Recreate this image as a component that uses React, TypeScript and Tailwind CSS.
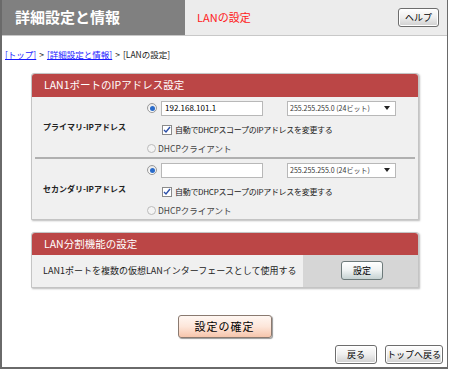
import React from 'react';

const font = { fontFamily: '"Noto Sans CJK JP", "Liberation Sans", sans-serif' };

function GrayButton({ label, className = '' }: { label: string; className?: string }) {
  return (
    <button
      className={`h-[19px] whitespace-nowrap rounded-[3px] border border-[#6d6d6d] bg-gradient-to-b from-[#ffffff] via-[#eeeeee] to-[#cfcfcf] text-[9px] leading-none text-black shadow-[inset_0_0_0_1px_#fff] ${className}`}
    >
      {label}
    </button>
  );
}

function Radio({ checked }: { checked?: boolean }) {
  return (
    <span className="inline-flex h-[10px] w-[10px] items-center justify-center rounded-full border border-[#9a9a9a] bg-gradient-to-b from-[#e8e8e8] to-white">
      {checked && <span className="h-[5px] w-[5px] rounded-full bg-[#2a6bc9]" />}
    </span>
  );
}

function Checkbox() {
  return (
    <span className="inline-flex h-[10px] w-[10px] items-center justify-center border border-[#8a8a8a] bg-white">
      <svg width="8" height="8" viewBox="0 0 8 8">
        <path d="M1 4 L3 6 L7 1" stroke="#2b4fa8" strokeWidth="1.4" fill="none" />
      </svg>
    </span>
  );
}

function AddressBlock({ label, value }: { label: string; value: string }) {
  return (
    <div className="flex h-[60px]">
      <div className="flex w-[105px] items-center whitespace-nowrap pl-[11px] text-[8px] font-bold text-[#222]">{label}</div>
      <div className="flex flex-1 flex-col pl-[10px] pt-[3px]">
        <div className="flex h-[17px] items-center">
          <Radio checked />
          <div className="ml-[4px] flex h-[15px] w-[102px] items-center border border-[#b8b8b8] bg-white pl-[3px] text-[8px] text-black">
            {value}
          </div>
          <div className="ml-[24px] flex h-[15px] w-[109px] items-center justify-between whitespace-nowrap border border-[#b8b8b8] bg-white pl-[2px] pr-[5px] text-[7px] text-[#333]">
            <span>255.255.255.0 (24ビット)</span>
            <svg width="6" height="4" viewBox="0 0 6 4">
              <path d="M0 0 H6 L3 4 Z" fill="#222" />
            </svg>
          </div>
        </div>
        <div className="mt-[5px] flex h-[17px] items-center whitespace-nowrap pl-[15px] text-[8px] tracking-[-0.3px] text-[#222]">
          <Checkbox />
          <span className="ml-[3px]">自動でDHCPスコープのIPアドレスを変更する</span>
        </div>
        <div className="mt-[2px] flex h-[17px] items-center whitespace-nowrap text-[8.5px] text-[#444]">
          <span className="inline-block h-[9px] w-[9px] rounded-full border border-[#bbb] bg-[#f4f4f4]" />
          <span className="ml-[2px]">DHCPクライアント</span>
        </div>
      </div>
    </div>
  );
}

export default function App() {
  return (
    <div className="h-[370px] w-[450px] bg-white" style={font}>
      <div className="flex h-[369px] w-[448px] flex-col border-[2px] border-t-0 border-[#6a6a6a] border-r-[1px]">
        {/* Header */}
        <div className="flex h-[36px] border-b border-[#c8c8c8]">
          <div className="flex w-[183px] items-center bg-[#808080] pl-[13px] text-[15px] font-bold text-white">
            詳細設定と情報
          </div>
          <div className="flex flex-1 items-center justify-between bg-[#ececec] pl-[12px] pr-[8px]">
            <span className="text-[11px] text-[#ff1a1a]">LANの設定</span>
            <GrayButton label="ヘルプ" className="w-[41px]" />
          </div>
        </div>

        {/* Breadcrumb */}
        <div className="mt-[12px] whitespace-nowrap pl-[3px] text-[8.5px] text-[#222]">
          <span className="text-[#1a1aff] underline">[トップ]</span>
          <span className="mx-[3px]">&gt;</span>
          <span className="text-[#1a1aff] underline">[詳細設定と情報]</span>
          <span className="mx-[3px]">&gt;</span>
          <span>[LANの設定]</span>
        </div>

        {/* Panel 1 */}
        <div className="mt-[12px] ml-[29px] w-[388px] rounded-t-[3px] border border-[#c4c4c4] bg-[#f0f0f0] shadow-[1px_1px_2px_#bbb]">
          <div className="flex h-[23px] items-center rounded-t-[3px] bg-[#bb4646] pl-[12px] text-[10.5px] text-white">
            LAN1ポートのIPアドレス設定
          </div>
          <AddressBlock label="プライマリ-IPアドレス" value="192.168.101.1" />
          <div className="mx-[3px] h-[2px] bg-[#b0b0b0]" />
          <AddressBlock label="セカンダリ-IPアドレス" value="" />
        </div>

        {/* Panel 2 */}
        <div className="mt-[12px] ml-[29px] w-[388px] rounded-t-[3px] border border-[#c4c4c4] bg-[#f0f0f0] shadow-[1px_1px_2px_#bbb]">
          <div className="flex h-[22px] items-center rounded-t-[3px] bg-[#bb4646] pl-[12px] text-[10.5px] text-white">
            LAN分割機能の設定
          </div>
          <div className="flex h-[32px]">
            <div className="flex w-[271px] items-center whitespace-nowrap pl-[11px] text-[9px] text-[#222]">
              LAN1ポートを複数の仮想LANインターフェースとして使用する
            </div>
            <div className="flex flex-1 items-center bg-[#d6d6d6] pl-[38px]">
              <button className="h-[19px] w-[42px] rounded-[3px] border border-[#6d7a7a] bg-gradient-to-b from-white via-[#eef2f2] to-[#c6d2d2] text-[9px] text-black">
                設定
              </button>
            </div>
          </div>
        </div>

        {/* Confirm */}
        <div className="mt-[27px] flex justify-center">
          <button className="h-[23px] w-[94px] rounded-[3px] border border-[#8a7a70] bg-gradient-to-b from-[#fff7f2] via-[#fde6da] to-[#f6c5ab] text-[11px] tracking-[1px] text-black shadow-[1px_1px_1px_#999]">
            設定の確定
          </button>
        </div>

        {/* Bottom buttons */}
        <div className="mt-[7px] flex justify-end gap-[8px] pr-[4px]">
          <GrayButton label="戻る" className="w-[42px]" />
          <GrayButton label="トップへ戻る" className="w-[58px]" />
        </div>
      </div>
    </div>
  );
}
